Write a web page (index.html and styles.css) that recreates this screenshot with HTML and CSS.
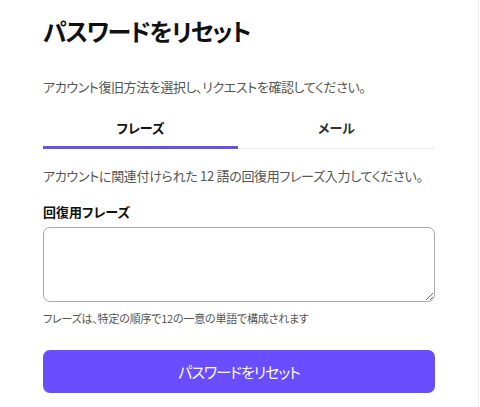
FILE: index.html
```html
<!DOCTYPE html>
<html lang="ja">
<head>
<meta charset="utf-8">
<link rel="stylesheet" href="styles.css">
</head>
<body>
<div class="frame">
  <main class="card">
    <h1 class="title">パスワードをリセット</h1>
    <p class="subtitle">アカウント復旧方法を選択し、リクエストを確認してください。</p>
    <div class="tabs">
      <div class="tab active">フレーズ</div>
      <div class="tab">メール</div>
    </div>
    <p class="desc">アカウントに関連付けられた 12 語の回復用フレーズ入力してください。</p>
    <label class="label" for="phrase">回復用フレーズ</label>
    <textarea id="phrase" class="input"></textarea>
    <p class="hint">フレーズは、特定の順序で12の一意の単語で構成されます</p>
    <button class="btn">パスワードをリセット</button>
  </main>
</div>
</body>
</html>
```

FILE: styles.css
```css
html, body {
  margin: 0;
  padding: 0;
  background: #fff;
}
body {
  font-family: "Noto Sans CJK JP", "Noto Sans", sans-serif;
  font-feature-settings: "palt";
  color: #111;
}
.frame {
  width: 478px;
  height: 407px;
  border-right: 1px solid #ececec;
  box-sizing: content-box;
}
.card {
  padding: 13px 0 0 43px;
  width: 392px;
  display: flex;
  flex-direction: column;
}
.title {
  margin: 0;
  font-size: 24px;
  font-weight: 700;
  line-height: 36px;
  letter-spacing: -1.3px;
}
.subtitle {
  margin: 29px 0 0;
  font-size: 13px;
  line-height: 18px;
  color: #555;
  letter-spacing: -0.4px;
}
.tabs {
  margin-top: 19px;
  display: grid;
  grid-template-columns: 195px 1fr;
  border-bottom: 1px solid #ececec;
}
.tab {
  text-align: center;
  font-size: 13px;
  font-weight: 700;
  line-height: 18px;
  padding: 4px 0 9px;
  color: #333;
}
.tab.active {
  color: #111;
  border-bottom: 3px solid #6a4fe0;
  margin-bottom: -1px;
}
.desc {
  margin: 18px 0 0;
  font-size: 13px;
  line-height: 18px;
  color: #555;
  letter-spacing: -0.3px;
  white-space: nowrap;
}
.label {
  margin-top: 18px;
  font-size: 13px;
  font-weight: 700;
  line-height: 18px;
  color: #111;
}
.input {
  margin-top: 6px;
  height: 75px;
  box-sizing: border-box;
  width: 392px;
  border: 1px solid #a9a9a9;
  border-radius: 7px;
  resize: vertical;
  font: inherit;
}
.hint {
  margin: 8px 0 0;
  font-size: 11px;
  line-height: 16px;
  color: #555;
  letter-spacing: -0.2px;
}
.btn {
  margin-top: 24px;
  height: 43px;
  width: 392px;
  border: none;
  border-radius: 7px;
  background: #6a4dff;
  color: #fff;
  font-family: inherit;
  font-feature-settings: "palt";
  font-size: 15px;
  font-weight: 400;
  letter-spacing: -1px;
}
```
